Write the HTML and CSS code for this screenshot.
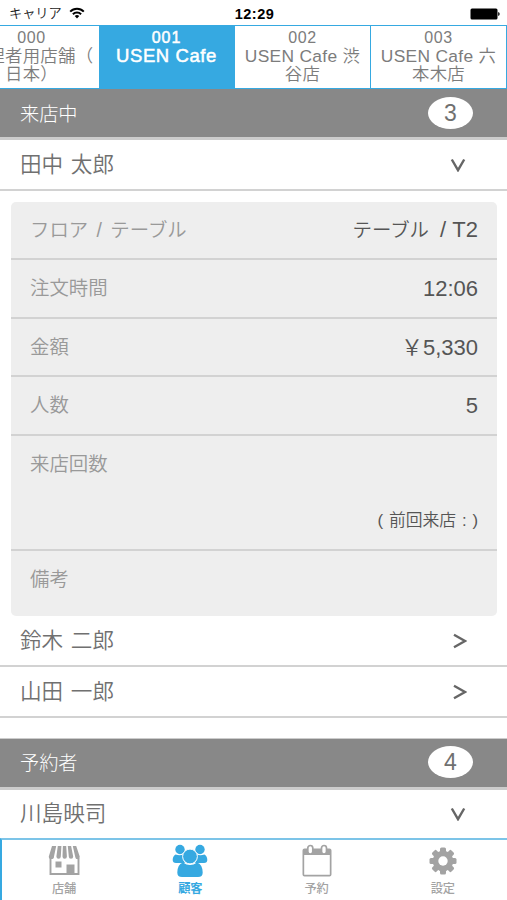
FILE: index.html
```html
<!DOCTYPE html>
<html lang="ja">
<head>
<meta charset="utf-8">
<title>顧客</title>
<link rel="stylesheet" href="styles.css">
</head>
<body>
<div class="screen">
  <header class="status">
    <div class="carrier">キャリア
      <svg class="wifi" width="16" height="12" viewBox="0 0 16 12"><g fill="none" stroke="#000" stroke-width="2"><path d="M1.2 4.6a9.6 9.6 0 0 1 13.6 0"/><path d="M3.9 7.3a5.8 5.8 0 0 1 8.2 0"/></g><path d="M8 11.4 5.7 9.1a3.3 3.3 0 0 1 4.6 0z"/></svg>
    </div>
    <div class="time">12:29</div>
    <svg class="battery" width="30" height="12" viewBox="0 0 30 12"><rect x=".5" y=".5" width="27" height="11" rx="1.5"/><path d="M28.2 4q1.5.5 1.500 2t-1.500 2z"/></svg>
  </header>

  <nav class="stores">
    <a class="store"><span class="code">000</span><span class="name">管理者用店舗（<br>日本）</span></a>
    <a class="store active"><span class="code">001</span><span class="name">USEN Cafe</span></a>
    <a class="store"><span class="code">002</span><span class="name">USEN Cafe 渋<br>谷店</span></a>
    <a class="store"><span class="code">003</span><span class="name">USEN Cafe 六<br>本木店</span></a>
  </nav>

  <main class="content">
    <section>
      <h2 class="group">来店中<span class="count">3</span></h2>
      <div class="guest first-row">田中 太郎<svg class="down" width="16" height="14" viewBox="0 0 16 14"><path d="M1.8 1.500 8 12.2 14.2 1.500"/></svg></div>
      <dl class="detail">
        <div class="item"><dt class="floor">フロア / テーブル</dt><dd><span class="kana">テーブル</span> / T2</dd></div>
        <div class="item"><dt>注文時間</dt><dd>12:06</dd></div>
        <div class="item"><dt>金額</dt><dd>￥5,330</dd></div>
        <div class="item"><dt>人数</dt><dd>5</dd></div>
        <div class="item visits"><dt>来店回数</dt><dd class="last">( 前回来店 : )</dd></div>
        <div class="item note"><dt>備考</dt><dd></dd></div>
      </dl>
      <div class="guest">鈴木 二郎<svg class="next" width="14" height="16" viewBox="0 0 14 16"><path d="M1 1.800 12 8 1 14.200"/></svg></div>
      <div class="guest">山田 一郎<svg class="next" width="14" height="16" viewBox="0 0 14 16"><path d="M1 1.800 12 8 1 14.200"/></svg></div>
    </section>
    <section class="reserved">
      <h2 class="group">予約者<span class="count">4</span></h2>
      <div class="guest last-row">川島映司<svg class="down" width="16" height="14" viewBox="0 0 16 14"><path d="M1.8 1.500 8 12.2 14.2 1.500"/></svg></div>
    </section>
  </main>

  <nav class="tabbar">
    <a class="tab">
      <svg width="34" height="34" viewBox="0 0 34 34"><path d="M5 2h4.200L7 12.500a2.600 2.600 0 0 1-5.200 0zM10.800 2h3.600l-.6 10.500a2.200 2.200 0 0 1-4.400 0zM15.900 2h3.300l.7 10.500a2.200 2.200 0 0 1-4.400 0zM20.800 2h3.300l2.100 10.500a2.200 2.200 0 0 1-4.400 0zM25.800 2h3.400l3.500 10.500a2.200 2.200 0 0 1-4.400.8z"/><path d="M3.500 14v16h28V14" fill="none" stroke="currentColor" stroke-width="1.900"/><path d="M8.500 17.500h6v6h-6zM19.500 20.500h8v9.500h-8z"/></svg>
      <span>店舗</span>
    </a>
    <a class="tab active">
      <svg width="36" height="34" viewBox="0 0 36 34"><circle cx="8" cy="5.500" r="4.700"/><circle cx="28" cy="5.500" r="4.700"/><path d="M3.500 10.500Q8 12 11 10.500q-.5 5 2 8.500H4Q.7 19 .7 16q0-4 2.800-5.500zM32.500 10.500Q28 12 25 10.500q.5 5-2 8.500h9q3.300 0 3.300-3 0-4-2.800-5.500z"/><path d="M11 18.500Q18 23.500 25 18.500q5.500 1.800 5.700 10 0 4.500-4.700 4.500H10q-4.700 0-4.700-4.500.2-8.200 5.700-10z"/><circle cx="18" cy="12.500" r="7.400" stroke="#fff" stroke-width="1"/></svg>
      <span>顧客</span>
    </a>
    <a class="tab">
      <svg width="32" height="34" viewBox="0 0 32 34"><path fill-rule="evenodd" d="M3.500 4.500h25a2 2 0 0 1 2 2v24a2 2 0 0 1-2 2h-25a2 2 0 0 1-2-2v-24a2 2 0 0 1 2-2zM3.200 11v19.700h25.600V11z"/><g fill="#fff" stroke="currentColor" stroke-width="1.700"><rect x="6.800" y="1.500" width="5" height="8.500" rx="2.500"/><rect x="20.500" y="1.500" width="5" height="8.500" rx="2.500"/></g></svg>
      <span>予約</span>
    </a>
    <a class="tab">
      <svg width="32" height="34" viewBox="-16 -17 32 34"><rect x="-3" y="-13.500" width="6" height="27" rx="1.500"/><rect x="-3" y="-13.500" width="6" height="27" rx="1.500" transform="rotate(45)"/><rect x="-3" y="-13.500" width="6" height="27" rx="1.500" transform="rotate(90)"/><rect x="-3" y="-13.500" width="6" height="27" rx="1.500" transform="rotate(135)"/><circle r="10.300"/><circle r="4.700" fill="#fff"/></svg>
      <span>設定</span>
    </a>
  </nav>
</div>
</body>
</html>
```

FILE: styles.css
```css
* { box-sizing: border-box; }
body { margin: 0; background: #fff; }

.screen {
  width: 507px;
  height: 900px;
  overflow: hidden;
  display: flex;
  flex-direction: column;
  font-family: "Liberation Sans", "Noto Sans CJK JP", sans-serif;
  font-weight: 350;
  color: #707070;
}

.status {
  height: 25px;
  flex: none;
  display: grid;
  grid-template-columns: 1fr auto 1fr;
  align-items: center;
  padding: 2px 7px 0 9px;
  color: #222;
}
.carrier { display: flex; align-items: center; gap: 7px; font-size: 13.2px; line-height: 20px; }
.wifi { margin-top: -2px; }
.time { font: 700 14.5px/20px "Liberation Sans", sans-serif; letter-spacing: .5px; color: #000; }
.battery { justify-self: end; }

.stores {
  height: 64px;
  flex: none;
  display: flex;
  margin-left: -36px;
  border-top: 1px solid #36a9e1;
  border-bottom: 1px solid #36a9e1;
}
.store {
  width: 136px;
  flex: none;
  padding-top: 2px;
  border-right: 1px solid #36a9e1;
  text-align: center;
  color: #7c7c7c;
  white-space: nowrap;
}
.store:first-child { width: 135px; border-right: 0; }
.code { display: block; font-size: 16px; line-height: 19px; letter-spacing: .6px; }
.name { display: block; font-size: 17.4px; line-height: 18px; letter-spacing: .3px; }
.store.active { background: #36a9e1; color: #fff; -webkit-text-stroke: .5px #fff; }
.active .code { letter-spacing: 1px; }
.active .name { font-size: 18.5px; letter-spacing: .6px; }

.content { flex: 1; }
.group {
  height: 51px;
  margin: 0;
  padding: 0 34px 1px 20px;
  display: flex;
  align-items: center;
  justify-content: space-between;
  background: #888;
  border-bottom: 3px solid #ccc;
  color: #fff;
  font-size: 19.2px;
  font-weight: 300;
}
.count {
  width: 45px;
  height: 32px;
  border-radius: 50%;
  background: #fff;
  color: #707070;
  font-size: 23px;
  line-height: 32px;
  text-align: center;
}
.guest {
  height: 51px;
  padding: 0 41px 3px 20px;
  display: flex;
  align-items: center;
  justify-content: space-between;
  border-bottom: 2px solid #d2d2d2;
  font-size: 21.6px;
  word-spacing: 1.6px;
}
.first-row { padding-bottom: 5px; }
.guest path { fill: none; stroke: #666; stroke-width: 2.4; }
.down { margin-top: 5px; }
.next { margin: 4px -1px 0 0; }

.detail {
  margin: 11px 10px 0 11px;
  background: #eee;
  border-radius: 5px;
}
.item {
  height: 58.6px;
  padding: 0 19px 0 19px;
  display: flex;
  justify-content: space-between;
  border-bottom: 2px solid #d2d2d2;
  line-height: 57px;
}
.item:first-child { height: 58px; line-height: 56px; }
dt { font-size: 19.4px; color: #999; }
.floor { word-spacing: 3px; }
dd { margin: 0; font-size: 22px; color: #555; }
.kana { font-size: 19.4px; margin-right: 5px; }
.visits { height: 115px; }
.last { align-self: flex-end; font-size: 16.8px; word-spacing: 1.2px; }
.note { height: 65.2px; border: 0; }

.reserved { padding-top: 20px; }
.reserved .group { height: 52px; padding-bottom: 2px; border-top: 1px solid #ccc; }
.last-row { height: 48px; padding-bottom: 4px; border: 0; }

.tabbar {
  height: 62px;
  flex: none;
  display: grid;
  grid-template-columns: repeat(4, 1fr);
  border-top: 2px solid #7cc4e8;
  border-left: 2px solid #36a9e1;
}
.tab {
  display: flex;
  flex-direction: column;
  align-items: center;
  margin-left: -2px;
  padding-top: 4px;
  color: #a3a3a3;
  font-size: 12.2px;
  font-weight: 500;
  line-height: 18px;
}
.tab span { margin-top: 2px; }
.tab svg { fill: currentColor; }
.tab.active { color: #36a9e1; font-weight: 700; }
```
